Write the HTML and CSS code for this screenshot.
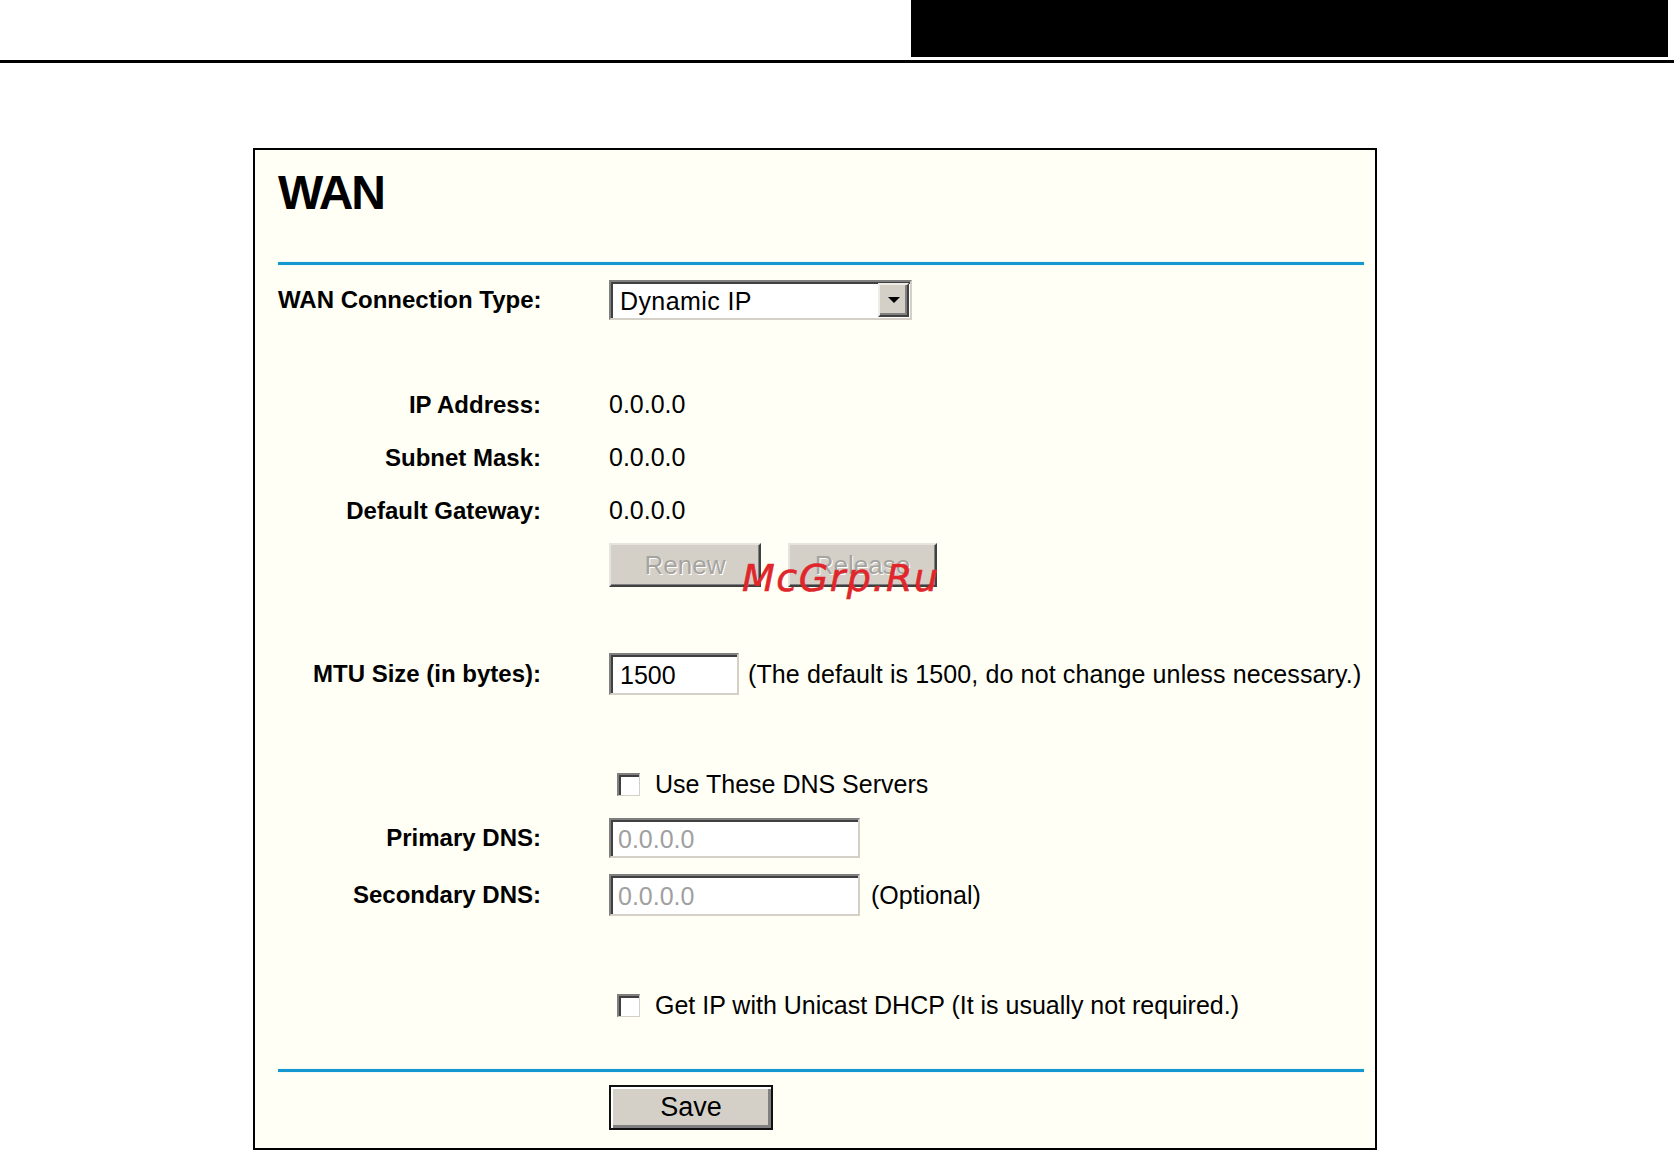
FILE: index.html
```html
<!DOCTYPE html>
<html lang="en">
<head>
<meta charset="utf-8">
<title>WAN</title>
<link rel="stylesheet" href="styles.css">
</head>
<body>
<header class="top"><div class="top-block"></div></header>
<div class="top-rule"></div>
<main class="panel">
  <h1 class="title">WAN</h1>
  <div class="blue-rule"></div>

  <div class="row r-type">
    <div class="label">WAN Connection Type:</div>
    <div class="value">
      <div class="select">
        <span class="select-text">Dynamic IP</span>
        <span class="select-btn"><svg width="12" height="7" viewBox="0 0 12 7"><polygon points="0,0 12,0 6,6" fill="#000"/></svg></span>
      </div>
    </div>
  </div>

  <div class="row r-info r-ip">
    <div class="label">IP Address:</div>
    <div class="value">0.0.0.0</div>
  </div>
  <div class="row r-info">
    <div class="label">Subnet Mask:</div>
    <div class="value">0.0.0.0</div>
  </div>
  <div class="row r-info">
    <div class="label">Default Gateway:</div>
    <div class="value">0.0.0.0</div>
  </div>
  <div class="row r-btns">
    <div class="label"></div>
    <div class="value btns">
      <span class="btn btn-renew">Renew</span>
      <span class="btn btn-release">Release</span>
    </div>
  </div>

  <div class="row r-mtu">
    <div class="label">MTU Size (in bytes):</div>
    <div class="value inline">
      <span class="input input-mtu">1500</span>
      <span class="hint">(The default is 1500, do not change unless necessary.)</span>
    </div>
  </div>

  <div class="row r-check r-check1">
    <div class="label"></div>
    <div class="value inline">
      <span class="checkbox"></span>
      <span class="check-text">Use These DNS Servers</span>
    </div>
  </div>
  <div class="row r-dns1">
    <div class="label">Primary DNS:</div>
    <div class="value inline">
      <span class="input input-dns disabled">0.0.0.0</span>
    </div>
  </div>
  <div class="row r-dns2">
    <div class="label">Secondary DNS:</div>
    <div class="value inline">
      <span class="input input-dns disabled">0.0.0.0</span>
      <span class="hint hint-opt">(Optional)</span>
    </div>
  </div>

  <div class="row r-check r-check2">
    <div class="label"></div>
    <div class="value inline">
      <span class="checkbox"></span>
      <span class="check-text">Get IP with Unicast DHCP (It is usually not required.)</span>
    </div>
  </div>

  <div class="blue-rule blue-rule-bottom"></div>

  <div class="row r-save">
    <div class="label"></div>
    <div class="value"><span class="btn-save">Save</span></div>
  </div>

  <div class="watermark">McGrp.Ru</div>
</main>
</body>
</html>
```

FILE: styles.css
```css
html, body {
  margin: 0;
  padding: 0;
  background: #ffffff;
}
body {
  font-family: "Liberation Sans", Arial, sans-serif;
  color: #000;
}

.top {
  height: 57px;
  display: flex;
  justify-content: flex-end;
  padding-right: 6px;
}
.top-block {
  width: 757px;
  height: 57px;
  background: #000;
}
.top-rule {
  height: 3px;
  margin-top: 3px;
  background: #000;
}

.panel {
  position: relative;
  margin: 85px 0 0 253px;
  width: 1086px;
  padding: 15px 11px 18px 23px;
  border: 2px solid #000;
  background: #fffff5;
}

.title {
  margin: 0;
  font-size: 48px;
  line-height: 56px;
  font-weight: bold;
  letter-spacing: -2px;
}

.blue-rule {
  height: 3px;
  margin-top: 41px;
  background: #1597d2;
  box-shadow: 0 0 1px #7fc8e8;
}
.blue-rule-bottom {
  margin-top: 49px;
}

.row {
  display: grid;
  grid-template-columns: 263px 1fr;
  column-gap: 68px;
  align-items: center;
}
.label {
  text-align: right;
  font-weight: bold;
  font-size: 24px;
  white-space: nowrap;
}
.value {
  font-size: 25px;
  white-space: nowrap;
}
.inline {
  display: flex;
  align-items: center;
}

.r-type { margin-top: 15px; height: 40px; }
.r-info { height: 53px; }
.r-ip { margin-top: 58px; }
.r-btns { margin-top: 6px; height: 44px; }
.r-mtu { margin-top: 66px; height: 42px; }
.r-check { height: 30px; }
.r-check1 { margin-top: 74px; }
.r-dns1 { margin-top: 19px; height: 40px; }
.r-dns2 { margin-top: 16px; height: 42px; }
.r-check2 { margin-top: 74px; }
.r-save { margin-top: 13px; height: 45px; }

/* select */
.select {
  box-sizing: border-box;
  width: 303px;
  height: 40px;
  background: #fff;
  border-top: 2px solid #808080;
  border-left: 2px solid #808080;
  border-right: 2px solid #d4d0c8;
  border-bottom: 2px solid #d4d0c8;
  box-shadow: inset 2px 2px 0 #404040;
  display: flex;
  align-items: center;
  justify-content: space-between;
  padding: 2px 1px 0 9px;
}
.select-text {
  font-size: 25px;
  letter-spacing: 0.4px;
}
.select-btn {
  box-sizing: border-box;
  width: 31px;
  height: 34px;
  background: #d4d0c8;
  border-top: 2px solid #eeece6;
  border-left: 2px solid #eeece6;
  border-right: 2px solid #404040;
  border-bottom: 2px solid #404040;
  box-shadow: inset -2px -2px 0 #808080;
  display: flex;
  align-items: center;
  justify-content: center;
  margin-top: -2px;
}

/* raised buttons */
.btns {
  display: flex;
  gap: 27px;
  height: 44px;
}
.btn {
  box-sizing: border-box;
  height: 44px;
  background: #d4d0c8;
  border-top: 2px solid #e6e4de;
  border-left: 2px solid #e6e4de;
  border-right: 2px solid #404040;
  border-bottom: 2px solid #404040;
  box-shadow: inset -1px -1px 0 #808080;
  display: flex;
  align-items: center;
  justify-content: center;
  font-size: 26px;
  color: #a6a49f;
  text-shadow: 1px 1px 0 #ffffff;
}
.btn-renew { width: 152px; }
.btn-release { width: 149px; }

.btn-save {
  box-sizing: border-box;
  width: 164px;
  height: 45px;
  background: #d4d0c8;
  border: 2px solid #101010;
  box-shadow: inset 2px 2px 0 #ffffff, inset -3px -3px 0 #808080;
  display: flex;
  align-items: center;
  justify-content: center;
  font-size: 27px;
  color: #000;
}

/* inputs */
.input {
  box-sizing: border-box;
  height: 42px;
  background: #fff;
  border-top: 2px solid #808080;
  border-left: 2px solid #808080;
  border-right: 2px solid #d4d0c8;
  border-bottom: 2px solid #d4d0c8;
  box-shadow: inset 2px 2px 0 #404040;
  display: flex;
  align-items: center;
  padding: 2px 0 0 9px;
  font-size: 25px;
}
.input-mtu { width: 130px; }
.input-dns { width: 251px; height: 40px; padding-left: 7px; }
.r-dns2 .input-dns { height: 42px; }
.input.disabled { color: #a0a0a0; }

.hint { margin-left: 9px; letter-spacing: 0.12px; }
.hint-opt { margin-left: 11px; letter-spacing: 0; }

/* checkbox */
.checkbox {
  box-sizing: border-box;
  width: 23px;
  height: 23px;
  margin-left: 8px;
  background: #fff;
  border-top: 2px solid #808080;
  border-left: 2px solid #808080;
  border-right: 1px solid #d4d0c8;
  border-bottom: 1px solid #d4d0c8;
  box-shadow: inset 2px 2px 0 #404040;
}
.check-text {
  margin-left: 15px;
}

/* watermark overlay */
.watermark {
  position: absolute;
  left: 487px;
  top: 409px;
  font-family: "DejaVu Sans", sans-serif;
  font-style: italic;
  font-size: 38px;
  line-height: 38px;
  letter-spacing: 1.5px;
  color: #e0262b;
  -webkit-text-stroke: 0.6px #e0262b;
  white-space: nowrap;
}
```
